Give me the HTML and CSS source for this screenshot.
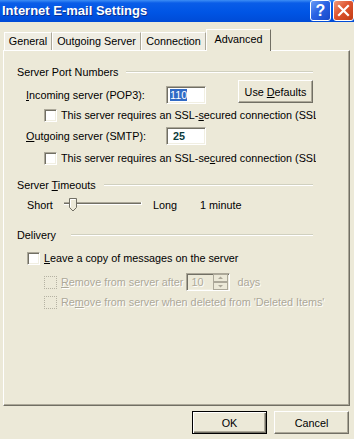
FILE: index.html
```html
<!DOCTYPE html>
<html>
<head>
    <meta charset="UTF-8">
    <title>Internet E-mail Settings</title>
    <link rel="stylesheet" href="styles.css">
</head>
<body>
<div class="window">
    <div class="titlebar">
        <span class="title">Internet E-mail Settings</span>
        <div class="caption-btns">
            <span class="cap help">?</span>
            <span class="cap close">
                <svg width="13" height="13" viewBox="0 0 13 13"><path d="M2 2 L11 11 M11 2 L2 11" stroke="#fff" stroke-width="2.2" stroke-linecap="square"/></svg>
            </span>
        </div>
    </div>

    <div class="tabs">
        <span class="tab tab-general">General</span>
        <span class="tab tab-outgoing">Outgoing Server</span>
        <span class="tab tab-connection">Connection</span>
        <span class="tab tab-advanced active">Advanced</span>
    </div>

    <div class="panel">
        <div class="group-title g-ports"><span>Server Port Numbers</span><i class="rule"></i></div>

        <div class="port-row first">
            <span class="port-label"><u>I</u>ncoming server (POP3):</span>
            <span class="field"><span class="sel">110</span></span>
            <button class="btn defaults">Use <u>D</u>efaults</button>
        </div>
        <div class="check-row ssl ssl-1">
            <span class="box"></span>
            <span>This server requires an SSL-<u>s</u>ecured connection (SSL)</span>
        </div>

        <div class="port-row second">
            <span class="port-label"><u>O</u>utgoing server (SMTP):</span>
            <span class="field"><span class="num">25</span></span>
        </div>
        <div class="check-row ssl ssl-2">
            <span class="box"></span>
            <span>This server requires an SSL-se<u>c</u>ured connection (SSL)</span>
        </div>

        <div class="group-title g-timeouts"><span>Server <u>T</u>imeouts</span><i class="rule"></i></div>
        <div class="slider-row">
            <span class="short">Short</span>
            <svg class="slider" width="78" height="16" viewBox="0 0 78 16">
                <rect x="0" y="5" width="78" height="1" fill="#aca899"/>
                <rect x="0" y="6" width="78" height="1" fill="#716f64"/>
                <rect x="0" y="7" width="78" height="1" fill="#fff"/>
                <rect x="77" y="5" width="1" height="3" fill="#fff"/>
                <polygon points="5.5,1.5 12.5,1.5 12.5,10.5 9,14 5.5,10.5" fill="#ece9d8" stroke="#716f64" stroke-width="1"/>
                <polyline points="6.5,10 6.5,2.5 11.5,2.5" fill="none" stroke="#fff" stroke-width="1"/>
            </svg>
            <span class="long">Long</span>
            <span>1 minute</span>
        </div>

        <div class="group-title g-delivery"><span>Delivery</span><i class="rule"></i></div>
        <div class="check-row leave">
            <span class="box"></span>
            <span><u>L</u>eave a copy of messages on the server</span>
        </div>
        <div class="check-row remove-after off">
            <span class="box"></span>
            <span><u>R</u>emove from server after</span>
            <span class="field days-field">
                <span class="days-num">10</span>
                <svg class="spin" width="15" height="16" viewBox="0 0 15 16">
                    <rect x="0.5" y="0.5" width="14" height="7" fill="#ece9d8" stroke="#aca899"/>
                    <rect x="0.5" y="8.5" width="14" height="7" fill="#ece9d8" stroke="#aca899"/>
                    <polygon points="5,5 10,5 7.5,2.5" fill="#aca899"/>
                    <polygon points="5,11 10,11 7.5,13.5" fill="#aca899"/>
                </svg>
            </span>
            <span class="days">days</span>
        </div>
        <div class="check-row remove-deleted off">
            <span class="box"></span>
            <span>Re<u>m</u>ove from server when deleted from 'Deleted Items'</span>
        </div>
    </div>

    <div class="footer">
        <button class="btn default">OK</button>
        <button class="btn">Cancel</button>
    </div>
</div>
</body>
</html>
```

FILE: styles.css
```css
body {
    margin: 0;
    background: #ece9d8;
    font-family: "Liberation Sans", "DejaVu Sans", sans-serif;
    font-size: 10.8px;
    color: #000;
}

.window {
    width: 354px;
    height: 439px;
    overflow: hidden;
    display: flex;
    flex-direction: column;
}

/* title bar */
.titlebar {
    height: 22px;
    flex: none;
    display: flex;
    justify-content: space-between;
    align-items: flex-start;
    background: linear-gradient(#3d8ef5 0, #0a5de8 3px, #0055e5 55%, #004bd6 100%);
    color: #fff;
}

.title {
    font-weight: bold;
    font-size: 13px;
    line-height: 16px;
    padding: 3px 0 0 2px;
    text-shadow: 1px 1px 0 #0a2f8f;
}

.caption-btns {
    display: flex;
    gap: 2px;
}

.cap {
    width: 21px;
    height: 21px;
    box-sizing: border-box;
    border: 1px solid #fff;
    border-radius: 3px;
    display: flex;
    align-items: center;
    justify-content: center;
    color: #fff;
    font-weight: bold;
    font-size: 16px;
}

.help {
    background: linear-gradient(135deg, #6a9cf5 0%, #2a63e4 45%, #1848c8 100%);
}

.close {
    background: linear-gradient(135deg, #f09a7c 0%, #de5430 45%, #c23c15 100%);
}

/* tabs */
.tabs {
    height: 21px;
    margin-top: 7px;
    padding-left: 4px;
    display: flex;
    align-items: flex-end;
    flex: none;
}

.tab {
    height: 18px;
    box-sizing: border-box;
    border: 1px solid #fff;
    border-right-color: #aca899;
    border-bottom: none;
    line-height: 17px;
    text-align: center;
    background: #efede3;
}

.tab-general { width: 48px; }
.tab-outgoing { width: 89px; }
.tab-connection { width: 65px; }
.tab-advanced { width: 65px; }

.tab.active {
    height: 22px;
    margin-bottom: -1px;
    line-height: 19px;
    background: #ece9d8;
    border-right-color: #716f64;
    position: relative;
    z-index: 1;
}

/* panel */
.panel {
    margin-left: 3px;
    width: 347px;
    height: 356px;
    flex: none;
    box-sizing: border-box;
    border: 1px solid;
    border-color: #fff #716f64 #716f64 #fff;
    box-shadow: inset -1px -1px 0 #aca899;
    padding: 13px 36px 0 13px;
}

.group-title {
    display: flex;
    align-items: center;
    height: 16px;
    white-space: nowrap;
}

.rule {
    flex: 1;
    height: 0;
    border-top: 1px solid #d0d0bf;
    border-bottom: 1px solid #fff;
    margin-left: 8px;
}

.g-delivery .rule { margin-left: 15px; }
.g-timeouts { margin-top: 11px; }
.g-delivery { margin-top: 14px; }

.port-row {
    display: flex;
    margin-left: 9px;
}

.port-row.first {
    height: 24px;
    align-items: flex-end;
}

.port-row.second {
    height: 18px;
    margin-top: 4px;
    align-items: center;
}

.port-label {
    width: 140px;
    line-height: 18px;
}

.field {
    width: 40px;
    height: 18px;
    box-sizing: border-box;
    border: 1px solid;
    border-color: #aca899 #fff #fff #aca899;
    box-shadow: inset 1px 1px 0 #716f64, inset -1px -1px 0 #f1efe2;
    background: #fff;
    padding: 1px 2px 0 3px;
    line-height: 14px;
}

.sel {
    background: #316ac5;
    color: #fff;
}

.num {
    font-weight: bold;
    color: #0d3b3b;
    padding-left: 3px;
}

.btn {
    width: 75px;
    height: 23px;
    box-sizing: border-box;
    background: #ece9d8;
    border: 1px solid;
    border-color: #fff #716f64 #716f64 #fff;
    box-shadow: inset -1px -1px 0 #aca899;
    font: inherit;
    color: #000;
    padding: 0;
}

.btn.defaults {
    align-self: flex-start;
    margin-left: 32px;
}

.btn.default {
    border-color: #000;
    box-shadow: inset 1px 1px 0 #fff, inset -1px -1px 0 #716f64, inset -2px -2px 0 #aca899;
}

.check-row {
    display: flex;
    align-items: center;
    height: 16px;
    white-space: nowrap;
}

.box {
    width: 13px;
    height: 13px;
    flex: none;
    box-sizing: border-box;
    border: 1px solid;
    border-color: #aca899 #fff #fff #aca899;
    box-shadow: inset 1px 1px 0 #716f64, inset -1px -1px 0 #f1efe2;
    background: #fff;
    margin-right: 4px;
}

.ssl {
    margin-left: 27px;
    margin-right: -3px;
    overflow: hidden;
}

.ssl-1 { margin-top: 3px; }
.ssl-2 { margin-top: 5px; }

.slider-row {
    display: flex;
    align-items: center;
    height: 16px;
    margin: 4px 0 0 10px;
}

.short { width: 37px; }
.slider { margin-right: 11px; }
.long { width: 47px; }

.leave {
    margin: 7px 0 0 10px;
}

.remove-after {
    height: 18px;
    margin: 7px 0 0 27px;
}

.remove-deleted {
    margin: 3px 0 0 27px;
}

.off {
    color: #aca899;
    text-shadow: 1px 1px 0 #fff;
}

.off .box {
    background: #ece9d8;
    border: 1px dotted #b5b2a3;
    box-shadow: none;
}

.days-field {
    width: 44px;
    margin-left: 3px;
    background: #ece9d8;
    display: flex;
    align-items: center;
    justify-content: space-between;
    padding: 0 1px 0 4px;
}

.days { margin-left: 7px; }

/* dialog buttons */
.footer {
    display: flex;
    justify-content: flex-end;
    gap: 7px;
    margin-top: 5px;
    padding-right: 5px;
}
```
